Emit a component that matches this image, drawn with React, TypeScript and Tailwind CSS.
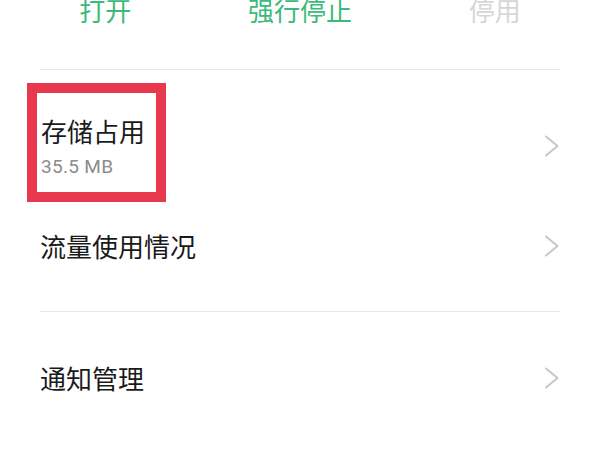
const Chevron = () => (
  <svg width="16" height="22" viewBox="0 0 16 22" fill="none" className="shrink-0">
    <path d="M2 1.5 L13.5 11 L2 20.5" stroke="#c7c7c7" strokeWidth="2" strokeLinecap="round" strokeLinejoin="round" />
  </svg>
);

export default function App() {
  return (
    <div
      className="w-[600px] h-[450px] overflow-hidden bg-white"
      style={{ fontFamily: '"Noto Sans CJK SC", "Noto Sans", sans-serif' }}
    >
      {/* action buttons, cut off at the top */}
      <div className="grid grid-cols-3 px-[8px] -mt-[3px] h-[26px] text-[26px] leading-[26px] text-center">
        <span className="text-[#3cb97b]">打开</span>
        <span className="text-[#3cb97b]">强行停止</span>
        <span className="text-[#d6d6d6]">停用</span>
      </div>

      <div className="mx-[40px] mt-[46px] h-px bg-[#e8e8e8]" />

      <div className="flex justify-between mt-[13px] pr-[40px] pl-[27px]">
        <div className="w-[139px] h-[119px] border-[10px] border-[#e8384d] pl-[4px] pt-[24px]">
          <div className="text-[26px] leading-[28px] text-[#1a1a1a]">存储占用</div>
          <div className="mt-[11px] text-[19px] leading-[21px] text-[#8c8c8c] font-['Roboto',sans-serif] tracking-[0.3px]">
            35.5 MB
          </div>
        </div>
        <div className="mt-[52px]">
          <Chevron />
        </div>
      </div>

      <div className="flex items-center justify-between h-[88px] px-[40px]">
        <span className="text-[26px] leading-[28px] text-[#1a1a1a]">流量使用情况</span>
        <Chevron />
      </div>

      <div className="mx-[40px] mt-[21px] h-px bg-[#e8e8e8]" />

      <div className="flex items-center justify-between h-[132px] px-[40px]">
        <span className="text-[26px] leading-[28px] text-[#1a1a1a]">通知管理</span>
        <Chevron />
      </div>
    </div>
  );
}
